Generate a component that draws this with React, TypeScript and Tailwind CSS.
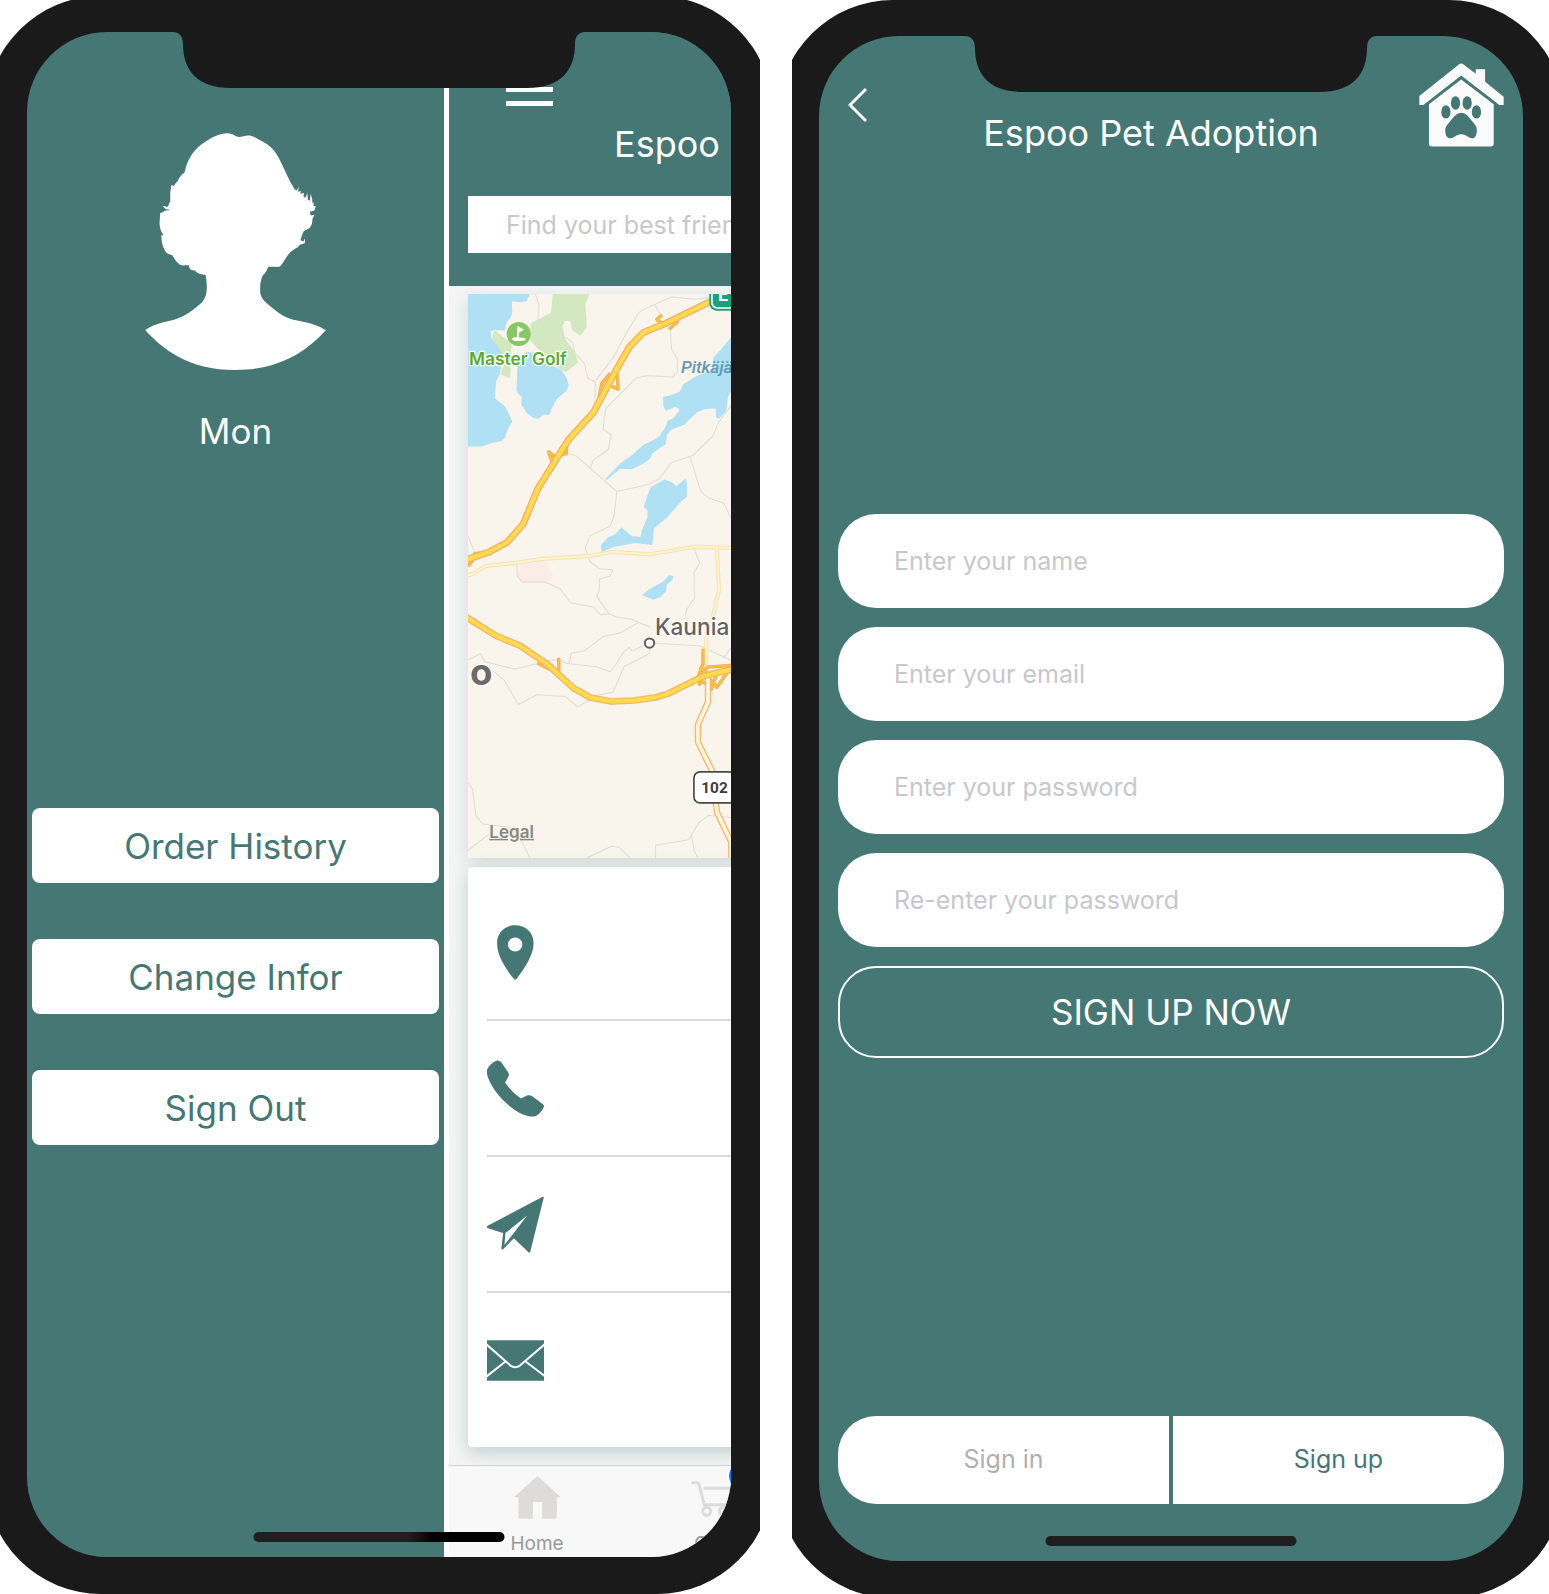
import type { ReactNode } from "react";

function Phone({ children, homeBar, className }: { children: ReactNode; homeBar: string; className: string }) {
  return (
    <section className="min-w-0 overflow-hidden">
      <div className={"-ml-[14px] -mr-3 rounded-[115px] bg-[#1a1a1a] px-[41px] pt-9 pb-[37px] " + className}>
        <div className="relative min-h-[1525px] overflow-hidden rounded-[80px] bg-[#457775] flex">
          {children}
          <svg
            className="absolute top-0 left-1/2 -translate-x-1/2"
            width="412"
            height="56"
            viewBox="0 0 412 56"
            aria-hidden="true"
          >
            <path
              fill="#1a1a1a"
              d="M0 0C6 0 10 4 10 12C10 38 24 56 58 56H354C388 56 402 38 402 12C402 4 406 0 412 0Z"
            />
          </svg>
          <div
            className={"absolute bottom-[15px] left-1/2 h-2.5 w-[251px] -translate-x-1/2 rounded-full " + homeBar}
          />
        </div>
      </div>
    </section>
  );
}

function Avatar() {
  return (
    <svg width="181" height="237" viewBox="436 400 541 710" fill="#fff" role="img" aria-label="Profile picture">
      <path d="M680 401C692 401 700 405 707 409C714 413 722 413 730 410C742 406 754 407 764 413L790 427C812 439 826 454 838 478C853 508 866 542 884 569L890 572L896 561L894 577L902 573L901 582L912 580L910 590L916 594L922 580L923 600L929 603L932 582L936 598L937 610L941 608L940 619L947 619L943 632L929 636L932 647L943 645L937 658C937 668 935 680 927 685L911 694C907 700 905 710 901 721L910 725L915 715L914 730L899 735L893 742C882 748 872 754 863 766C855 777 850 788 842 798C838 803 829 801 805 801C800 810 798 820 788 827C781 841 779 860 781 881C783 893 790 901 797 907C817 924 838 944 868 956C896 966 941 967 977 991C924 1048 846 1110 706 1110C566 1110 489 1048 436 990C467 969 494 967 520 960C556 950 583 928 607 906C624 887 622 856 617 825C604 824 593 822 585 812C577 810 568 812 567 796C556 795 547 799 539 794C528 785 523 775 517 766C509 763 500 762 496 754C487 739 485 724 484 706L491 706C481 693 479 681 479 668L481 640L491 637L493 633L512 631L497 628L488 618L502 622C508 618 505 611 511 606L511 579L514 556L521 559C527 549 534 546 537 536L545 525C549 520 553 524 555 514C562 484 576 460 594 443C618 424 648 402 680 401Z" />
    </svg>
  );
}

function DrawerButton({ children }: { children: ReactNode }) {
  return (
    <button type="button" className="h-[75px] rounded-lg bg-white text-[35px] leading-[44px] text-[#457775]">
      {children}
    </button>
  );
}

const rampPaths =
  "M635 105L620 118L634 130M685 122L656 148M500 275L504 327L483 318M480 280L455 310L445 360M350 495L348 520L315 530L296 515L306 545M54 845L75 820L100 816M54 858L70 838M326 1132V1180M262 1148L310 1172M758 1105V1150L742 1195L790 1225M748 1160L800 1220L835 1170M745 1215L770 1160L843 1155M780 1230L800 1180";
const minorRoads =
  "M54 885L68 881L108 857L200 847L280 835L420 827L485 815L600 822L735 799L880 804M800 803L806 930L788 1010L768 1075V1180";
const route102 = "M773 1190V1265L743 1332V1385L785 1470L800 1595L843 1685V1740";
const ringNorth = "M40 841L115 816L170 787L219 732L263 626L354 480L430 397L495 275L538 200L580 157L640 133L810 50";
const ringSouth =
  "M40 1005L138 1066L210 1096L290 1150L370 1223L420 1251L483 1263L550 1260L615 1251L650 1241L760 1187L880 1158";

function CityMap() {
  return (
    <svg
      className="block h-[564px] w-full bg-[#f9f4ec]"
      viewBox="54 42 912 1690"
      preserveAspectRatio="xMinYMin slice"
      role="img"
      aria-label="Map of Espoo"
      fontFamily="Inter, sans-serif"
    >
      <g fill="#d2e9bf">
        <path d="M308 42H418L406 70L410 142L391 166L365 150L361 124L345 122L337 138L345 176L352 186L375 217L384 247L348 276L330 268L290 235L240 180L243 130L303 98Z" />
        <path d="M133 150L185 190L180 294L152 284L165 240L140 200L125 175Z" />
      </g>
      <g fill="#afe0f4">
        <path d="M54 42H240L230 62L214 67L186 64V88C190 104 178 118 170 128L164 152L133 149L122 154L124 176L150 206L158 225L150 280L138 305L135 355L165 378L187 424L174 446L165 472L156 482L120 490L95 499H54Z" />
        <path d="M203 240C212 222 225 216 236 216C252 216 255 232 264 233C275 234 280 245 290 250C305 260 320 260 330 268C342 276 352 296 355 312C356 322 350 332 346 336L321 356L302 390L299 404L280 404L265 416L249 413C240 405 236 402 231 400L214 373L215 350C202 340 196 330 200 318Z" />
        <path d="M860 150L812 208L790 232L785 270L735 290L700 312L688 335L658 347L639 350V374C640 386 646 391 650 391L670 382C680 378 688 386 686 392L670 414L652 422L648 436L628 468L606 482L580 494L545 525L515 546L464 597L470 599L510 566L545 567L580 550L600 535L606 520L646 492L650 464L664 448L702 434L740 396C760 386 785 384 797 386V412L806 416L828 392L833 350L860 300Z" />
        <path d="M643 598L665 606L678 618L705 596L710 606V650L694 662L664 696L650 712L612 744L606 794L555 788L490 800L455 815L452 795L475 770L495 762L514 741L545 768L571 770L575 750L592 712V690L581 680L590 650L602 620Z" />
        <path d="M575 945L600 925L640 903L656 885L670 887L666 900L650 912L648 932L630 950L610 958Z" />
      </g>
      <path fill="#fbece8" d="M218 844L285 840L310 888L292 905H216L202 885Z" />
      <g fill="none" stroke="#deddd5" strokeWidth="3" strokeLinejoin="round">
        <path d="M256 42L267 75L264 115L290 155L320 172L350 173L368 190L375 220L404 252L412 293L436 306L434 370" />
        <path d="M437 300L490 232L530 156L566 98L580 88L664 51L735 58L780 50" />
        <path d="M614 75L632 105M660 145L664 207L683 240L681 276L668 291L590 287L558 294L512 340L466 387L459 447L483 464L474 508L430 540L420 563" />
        <path d="M345 518L378 527L500 634L492 705L480 738L420 766L405 803L420 845L448 865L488 868L480 888L448 896L447 930L440 948L476 1000L450 1003L430 980L362 968L330 925L285 905H215L202 886L200 842" />
        <path d="M500 634L597 612L627 596L662 548L727 526L788 467L805 427L870 338M718 528L752 634L775 653L820 668L860 750" />
        <path d="M730 800L748 848L731 878L733 952L709 988L704 1018M476 1000L500 1010L540 1016L600 1040M600 1088L748 1096L860 1148" />
        <path d="M562 1028L508 1058L460 1068L402 1112L364 1118L356 1150L436 1158L480 1174L496 1154L520 1115L538 1100L545 1112L597 1088M600 1106L597 1120L522 1158L488 1236L436 1245L383 1280L345 1248L260 1243L205 1272L163 1200L130 1172" />
        <path d="M54 1138L92 1120L104 1144L195 1166L310 1138L356 1150M54 1507L68 1527L78 1605L98 1630L180 1640L205 1665L240 1732M54 1710L130 1650M410 1732L484 1697L507 1700L540 1732M616 1732V1694L715 1677L745 1627L775 1604L860 1612M724 1665L732 1710L743 1732M54 768L74 815M820 1130L860 1080" />
      </g>
      <g fill="none" strokeLinejoin="round">
        <path stroke="#f6e2ae" strokeWidth="12" d={minorRoads} />
        <path stroke="#fdf6cf" strokeWidth="6" d={minorRoads} />
        <path stroke="#f0a94e" strokeWidth="10" d={rampPaths} />
        <path stroke="#fbc33a" strokeWidth="5" d={rampPaths} />
        <path stroke="#f5b67c" strokeWidth="19" d={route102} />
        <path stroke="#fdf6d2" strokeWidth="11" d={route102} />
        <path stroke="#f3b06b" strokeWidth="21" d={ringNorth} />
        <path stroke="#ffdb4b" strokeWidth="13" d={ringNorth} />
        <path stroke="#f3b06b" strokeWidth="20" d={ringSouth} />
        <path stroke="#ffdb4b" strokeWidth="13" d={ringSouth} />
      </g>
      <circle cx="206" cy="162" r="36" fill="#86c766" />
      <path fill="#fff" d="M201 137L222 149L207 157V172C236 172 234 183 206 183C180 183 180 172 201 170Z" />
      <g stroke="#fff" strokeWidth="7" strokeLinejoin="round" paintOrder="stroke">
        <text x="57" y="256" fontSize="52" fontWeight="600" fill="#58ab30">Master Golf</text>
        <text x="614" y="1065" fontSize="68" fontWeight="500" fill="#63625e">Kaunia</text>
        <text x="60" y="1214" fontSize="110" fontWeight="700" fill="#6e6b65">o</text>
      </g>
      <text x="692" y="280" fontFamily="Roboto, sans-serif" fontSize="52" fontStyle="italic" fontWeight="500" fill="#6299b5">
        Pitkäjä
      </text>
      <circle cx="598" cy="1088" r="14" fill="#fff" stroke="#605f5b" strokeWidth="6" />
      <rect x="731" y="1474" width="124" height="93" rx="18" fill="#fff" stroke="#4a4a4a" strokeWidth="5" />
      <text x="753" y="1537" fontFamily="Roboto, sans-serif" fontSize="46" fontWeight="700" fill="#3c3c3c">102</text>
      <rect x="777" y="-20" width="150" height="112" rx="22" fill="#18a17c" />
      <rect x="785" y="-12" width="150" height="96" rx="16" fill="#18a17c" stroke="#fff" strokeWidth="5" />
      <text x="803" y="63" fontFamily="Roboto, sans-serif" fontSize="54" fontWeight="700" fill="#fff">E1</text>
      <text x="118" y="1671" fontSize="51" fontWeight="600" fill="#8a8883" stroke="#f9f4ec" strokeWidth="5" paintOrder="stroke" textDecoration="underline">Legal</text>
    </svg>
  );
}

const contactIcons = [
  {
    name: "Address",
    box: "111 156 170 166",
    art: (
      <path
        fillRule="evenodd"
        d="M195 160C226 160 250 181 250 212C250 246 223 285 200 315Q195 321 190 315C165 284 141 247 141 212C141 181 165 160 195 160ZM195 195A21 20 0 1 0 195 236A21 20 0 1 0 195 195Z"
      />
    ),
  },
  {
    name: "Phone",
    box: "111 550 170 166",
    art: (
      <path d="M138 552Q148 550 154 557L174 586Q178 592 175 598L165 616C177 633 194 650 212 662L232 653Q239 651 245 655L277 678Q283 682 280 688C274 700 266 708 257 713C250 716 241 715 233 713C213 709 195 698 177 683C152 662 128 636 115 604C111 594 109 584 112 576C116 568 126 557 138 552Z" />
    ),
  },
  {
    name: "Website",
    box: "111 946 170 166",
    art: (
      <path
        fillRule="evenodd"
        d="M277 948Q281 947 280 952L240 1108Q238 1113 234 1109L191 1069L160 1100Q153 1104 154 1098L159 1054L112 1039Q108 1036 113 1033ZM231 1003L166 1054L163 1089Z"
      />
    ),
  },
  {
    name: "Email",
    box: "111 1341 170 166",
    art: (
      <>
        <path d="M111 1365H281V1483H111Z" />
        <path
          fill="none"
          stroke="#fff"
          strokeWidth="6"
          d="M109 1377L180 1438Q195 1449 210 1438L283 1377M109 1471L166 1427M283 1469L226 1427"
        />
      </>
    ),
  },
];

function MenuScreen() {
  return (
    <>
      <aside className="flex w-[417px] shrink-0 flex-col pt-[101px]">
        <div className="flex justify-center">
          <Avatar />
        </div>
        <p className="mt-[39px] text-center text-[35px] leading-[44px] text-white">Mon</p>
        <nav className="mt-[355px] flex flex-col gap-14 px-[5px]">
          <DrawerButton>Order History</DrawerButton>
          <DrawerButton>Change Infor</DrawerButton>
          <DrawerButton>Sign Out</DrawerButton>
        </nav>
      </aside>
      <div className="flex min-w-0 flex-1 flex-col overflow-hidden border-l-[5px] border-white">
        <header className="bg-[#457775] pt-[41px] pb-[33px]">
          <button type="button" aria-label="Menu" className="ml-[57px] flex w-[47px] flex-col gap-[9px]">
            <span className="h-[5px] w-full bg-white" />
            <span className="h-[5px] w-full bg-white" />
            <span className="h-[5px] w-full bg-white" />
          </button>
          <h1 className="mt-4 pl-[165px] text-[36px] leading-[44px] whitespace-nowrap text-white">Espoo</h1>
          <input
            type="search"
            aria-label="Find your best friend"
            placeholder="Find your best friend"
            className="mt-[30px] ml-[19px] block h-[57px] w-[400px] bg-white pl-[38px] text-[25px] placeholder:text-[#c7c7cc]"
          />
        </header>
        <main className="-mr-10 flex flex-col gap-[9px] bg-[#f5f5f5] pt-2 pb-[18px] pl-[19px]">
          <div className="shadow-[0_6px_18px_rgba(69,119,117,0.2)]">
            <CityMap />
          </div>
          <ul className="rounded-l-sm bg-white py-[18px] pl-[19px] shadow-[0_6px_18px_rgba(69,119,117,0.3)]">
            {contactIcons.map((icon) => (
              <li
                key={icon.name}
                className="flex h-[136px] items-center border-b-2 border-[#dadada] last:border-transparent"
              >
                <svg
                  width="57"
                  height="57"
                  viewBox={icon.box}
                  preserveAspectRatio="none"
                  fill="#457775"
                  role="img"
                  aria-label={icon.name}
                >
                  {icon.art}
                </svg>
              </li>
            ))}
          </ul>
        </main>
        <nav className="flex flex-1 border-t border-[#cfd2d2] bg-[#f8f8f8] text-[19px] leading-6 text-[#999]">
          <a href="#home" className="flex w-44 shrink-0 flex-col items-center pt-[10px]">
            <svg width="48" height="43" viewBox="250 225 143 129" fill="#dddcda" aria-hidden="true">
              <path d="M323 225L393 289H381V347Q381 353 375 353H337V303H309V353H272Q266 353 266 347V289H252Z" />
            </svg>
            <span className="mt-[13px]">Home</span>
          </a>
          <a href="#cart" className="relative flex w-44 shrink-0 flex-col items-center pt-[10px]">
            <svg
              width="44"
              height="43"
              viewBox="787 225 132 129"
              fill="none"
              stroke="#dddcda"
              strokeWidth="9"
              aria-hidden="true"
            >
              <path strokeLinecap="round" d="M792 245H804Q809 245 811 251L827 311H906M829 262H916L905 297" />
              <circle cx="834" cy="331" r="12" />
              <circle cx="884" cy="331" r="12" />
            </svg>
            <span className="mt-[13px]">Cart</span>
            <span className="absolute -top-[6px] left-[102px] size-[32px] rounded-full border-2 border-white bg-[#0a7aff]" />
          </a>
        </nav>
      </div>
    </>
  );
}

function PetHouseLogo() {
  return (
    <svg width="85" height="84" viewBox="118 187 256 252" fill="#fbfbfb" role="img" aria-label="Espoo Pet Adoption logo">
      <path d="M119 286L239 190Q245 186 251 190L289 219V205H317V243L373 288V313H360L245 224L131 313H119Z" />
      <path d="M245 236L343 311V429Q343 438 334 438H157Q148 438 148 429V311Z" />
      <g fill="#457775">
        <ellipse cx="199" cy="334" rx="14" ry="20" />
        <ellipse cx="228" cy="307" rx="14" ry="20" />
        <ellipse cx="263" cy="307" rx="14" ry="20" />
        <ellipse cx="291" cy="334" rx="14" ry="20" />
        <path d="M245 336C256 336 263 343 269 351L288 374C294 383 293 394 290 403C287 413 278 416 268 410C252 398 238 398 223 410C213 416 202 413 199 403C196 392 196 382 202 374L221 351C228 343 235 336 245 336Z" />
      </g>
    </svg>
  );
}

const fields = [
  { label: "Enter your name", type: "text" },
  { label: "Enter your email", type: "email" },
  { label: "Enter your password", type: "password" },
  { label: "Re-enter your password", type: "password" },
];

function SignUpScreen() {
  return (
    <div className="flex min-w-0 flex-1 flex-col px-[19px] pt-[27px] pb-[57px]">
      <header className="flex items-start">
        <button type="button" aria-label="Back" className="mt-6 ml-[10px] w-[35px]">
          <svg width="22" height="36" viewBox="0 0 22 36" fill="none" stroke="#fff" strokeWidth="3" aria-hidden="true">
            <path d="M18 2L2 18L18 34" />
          </svg>
        </button>
        <h1 className="mt-12 flex-1 text-center text-[36px] leading-[44px] whitespace-nowrap text-white">
          Espoo Pet Adoption
        </h1>
        <PetHouseLogo />
      </header>
      <form className="mt-[359px] flex flex-col gap-[19px]" onSubmit={(e) => e.preventDefault()}>
        {fields.map((f) => (
          <input
            key={f.label}
            type={f.type}
            aria-label={f.label}
            placeholder={f.label}
            className="h-[94px] w-full rounded-[38px] bg-white px-14 text-[25px] placeholder:text-[#c7c7cc]"
          />
        ))}
        <button
          type="submit"
          className="h-[92px] rounded-[38px] border-2 border-white text-[35px] leading-[44px] text-white"
        >
          SIGN UP NOW
        </button>
      </form>
      <div className="mt-auto grid grid-cols-2 gap-1 text-[25px]">
        <button type="button" className="h-[88px] rounded-l-[38px] bg-white text-[#b0b0b0]">
          Sign in
        </button>
        <button type="button" className="h-[88px] rounded-r-[38px] bg-white text-[#457775]">
          Sign up
        </button>
      </div>
    </div>
  );
}

export default function App() {
  return (
    <div className="grid h-screen grid-cols-[760fr_757fr] gap-8 overflow-hidden bg-white font-['Inter',sans-serif]">
      <Phone
        className="-mt-1"
        homeBar="bg-[linear-gradient(90deg,#1f1f1f_62%,#000_72%)]"
      >
        <MenuScreen />
      </Phone>
      <Phone className="mr-[-15px]" homeBar="bg-[#1f1f1f]">
        <SignUpScreen />
      </Phone>
    </div>
  );
}
